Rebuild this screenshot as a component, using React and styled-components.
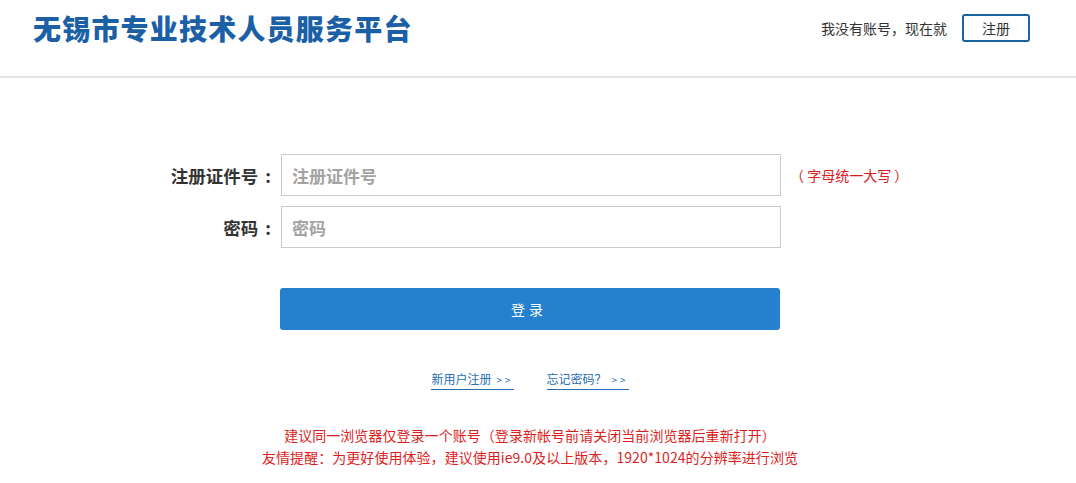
import React from "react";
import styled, { createGlobalStyle } from "styled-components";

const Global = createGlobalStyle`
  html, body { margin: 0; padding: 0; background: #fff; }
  body {
    font-family: "Noto Sans CJK SC", "Noto Sans", sans-serif;
    color: #333;
    text-spacing-trim: space-all;
  }
  * { box-sizing: border-box; }
`;

const Header = styled.header`
  height: 78px;
  border-bottom: 2px solid #e6e6e6;
  display: flex;
  align-items: flex-start;
  justify-content: space-between;
  padding: 0 46px 0 33px;
`;

const Title = styled.h1`
  margin: 11px 0 0;
  font-size: 28px;
  line-height: 34px;
  font-weight: 900;
  letter-spacing: 1.2px;
  color: #1b5fa7;
`;

const HeaderRight = styled.div`
  display: flex;
  align-items: center;
  gap: 15px;
  margin-top: 14px;
  font-size: 14px;
  color: #333;
`;

const OutlineButton = styled.button`
  width: 68px;
  height: 28px;
  border: 2px solid #1e62a6;
  border-radius: 3px;
  background: #fff;
  color: #333;
  font-family: inherit;
  font-size: 14px;
  padding: 0;
  cursor: pointer;
`;

const Main = styled.main`
  width: 1060px;
  padding-top: 76px;
`;

const FormGrid = styled.div`
  display: grid;
  grid-template-columns: 1fr 500px 1fr;
  row-gap: 10px;
  align-items: center;
`;

const Label = styled.label`
  text-align: right;
  padding-right: 9px;
  font-size: 17.5px;
  font-weight: 700;
  color: #333;
`;

const Colon = styled.span`
  margin-left: 7px;
`;

const Input = styled.input`
  width: 500px;
  height: 42px;
  margin-left: 1px;
  border: 1px solid #cccccc;
  padding: 0 10px;
  font-family: inherit;
  font-size: 17px;
  font-weight: 600;
  color: #333;
  outline: none;
  &::placeholder { color: #a3a3a3; }
`;

const Hint = styled.span`
  padding-left: 10px;
  font-size: 14px;
  color: #d8201f;
`;

const Empty = styled.span``;

const SubmitRow = styled.div`
  grid-column: 2;
  margin-top: 30px;
`;

const PrimaryButton = styled.button`
  width: 500px;
  height: 42px;
  border: none;
  border-radius: 3px;
  background: #2680d0;
  color: #fff;
  font-family: inherit;
  font-size: 14px;
  letter-spacing: 4px;
  padding-left: 4px;
  cursor: pointer;
`;

const Links = styled.div`
  display: flex;
  justify-content: center;
  gap: 33px;
  margin-top: 41px;
`;

const Link = styled.a`
  font-size: 12px;
  line-height: 16px;
  color: #2a6cb2;
  text-decoration: none;
  border-bottom: 1px solid #2a6cb2;
  padding-bottom: 1px;
`;

const Arrow = styled.span`
  font-size: 10px;
  letter-spacing: 3px;
  margin-left: 5px;
`;

const Notes = styled.div`
  margin-top: 34px;
  text-align: center;
  font-size: 14px;
  line-height: 22px;
  letter-spacing: 0.05px;
  color: #dc1e1e;
`;

export default function App() {
  return (
    <>
      <Global />
      <Header>
        <Title>无锡市专业技术人员服务平台</Title>
        <HeaderRight>
          <span>我没有账号，现在就</span>
          <OutlineButton>注册</OutlineButton>
        </HeaderRight>
      </Header>
      <Main>
        <FormGrid>
          <Label>注册证件号<Colon>:</Colon></Label>
          <Input placeholder="注册证件号" />
          <Hint>（ 字母统一大写 ）</Hint>
          <Label>密码<Colon>:</Colon></Label>
          <Input type="password" placeholder="密码" />
          <Empty />
          <SubmitRow>
            <PrimaryButton>登录</PrimaryButton>
          </SubmitRow>
        </FormGrid>
        <Links>
          <Link href="#">新用户注册<Arrow>&gt;&gt;</Arrow></Link>
          <Link href="#">忘记密码？<Arrow>&gt;&gt;</Arrow></Link>
        </Links>
        <Notes>
          <div>建议同一浏览器仅登录一个账号（登录新帐号前请关闭当前浏览器后重新打开）</div>
          <div>友情提醒：为更好使用体验，建议使用ie9.0及以上版本，1920*1024的分辨率进行浏览</div>
        </Notes>
      </Main>
    </>
  );
}
